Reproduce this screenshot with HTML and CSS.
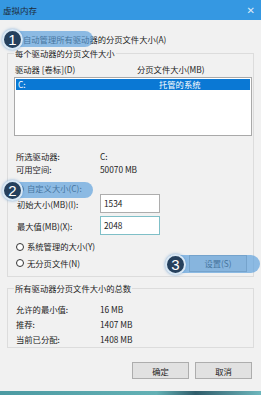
FILE: index.html
```html
<!DOCTYPE html>
<html lang="zh-CN">
<head>
  <meta charset="UTF-8" />
  <title>虚拟内存</title>
  <link rel="stylesheet" href="styles.css">
</head>
<body>
  <div class="window">
    <div class="titlebar">
      <span class="title">虚拟内存</span>
      <span class="close">✕</span>
    </div>

    <div class="content">
      <div class="check-row"><span class="checkbox"></span>自动管理所有驱动器的分页文件大小(A)</div>

      <fieldset class="group group-drive">
        <legend>每个驱动器的分页文件大小</legend>
        <div class="list-head">
          <span class="col-drive">驱动器 [卷标](D)</span>
          <span class="col-size">分页文件大小(MB)</span>
        </div>
        <div class="listbox">
          <div class="list-row selected">
            <span class="col-drive">C:</span>
            <span class="col-size">托管的系统</span>
          </div>
        </div>

        <div class="info">
          <div class="info-row"><span class="key">所选驱动器:</span><span>C:</span></div>
          <div class="info-row"><span class="key">可用空间:</span><span>50070 MB</span></div>
        </div>

        <div class="radio-row custom"><span class="radio"></span>自定义大小(C):</div>
        <div class="field-row"><span class="key">初始大小(MB)(I):</span><span class="input">1534</span></div>
        <div class="field-row"><span class="key">最大值(MB)(X):</span><span class="input active">2048</span></div>

        <div class="radio-row system"><span class="radio"></span>系统管理的大小(Y)</div>
        <div class="radio-row last">
          <span class="radio"></span>无分页文件(N)
          <button class="btn btn-set">设置(S)</button>
        </div>
      </fieldset>

      <fieldset class="group group-total">
        <legend>所有驱动器分页文件大小的总数</legend>
        <div class="info-row"><span class="key">允许的最小值:</span><span>16 MB</span></div>
        <div class="info-row"><span class="key">推荐:</span><span>1407 MB</span></div>
        <div class="info-row"><span class="key">当前已分配:</span><span>1408 MB</span></div>
      </fieldset>

      <div class="actions">
        <button class="btn">确定</button>
        <button class="btn">取消</button>
      </div>
    </div>

    <div class="strip"></div>

    <!-- step markers laid over the dialog -->
    <div class="mark mark-1"><span class="badge">1</span></div>
    <div class="mark mark-2"><span class="badge">2</span></div>
    <div class="mark mark-3"><span class="badge">3</span></div>
  </div>
</body>
</html>
```

FILE: styles.css
```css
* {
  margin: 0;
  padding: 0;
  box-sizing: border-box;
}

body {
  background-color: #f0f0f0;
  font-family: "Noto Sans CJK SC", "Noto Sans", sans-serif;
  font-size: 8.3px;
  color: #1c1c1c;
}

.window {
  position: relative;
  width: 261px;
  height: 395px;
  background-color: #f1f1f1;
  overflow: hidden;
}

.titlebar {
  height: 20px;
  background-color: #3598e2;
  display: flex;
  align-items: center;
  justify-content: space-between;
  padding: 0 6px 0 3px;
}

.title {
  color: #1d2a38;
  font-size: 8.5px;
}

.close {
  color: #dbeaf7;
  font-family: "DejaVu Sans", sans-serif;
  font-size: 10px;
}

.content {
  padding: 13px 7px 0 7px;
}

.check-row {
  display: flex;
  align-items: center;
  height: 12px;
  padding-left: 5px;
  gap: 3px;
}

.checkbox {
  width: 8px;
  height: 8px;
  border: 1px solid #333;
  background-color: #fff;
}

.group {
  border: 1px solid #dcdcdc;
  padding: 4px 1px 4px 6px;
}

.group legend {
  line-height: 12px;
  padding: 0 1px;
}

.group-drive {
  margin-top: 2px;
}

.list-head {
  display: flex;
  line-height: 12px;
  padding-left: 1px;
}

.col-drive {
  width: 122px;
}

.listbox {
  margin-top: 2px;
  height: 59px;
  background-color: #fff;
  border: 1px solid #a9a9a9;
  padding: 1px;
}

.list-row {
  display: flex;
  line-height: 11px;
  padding-left: 2px;
}

.list-row.selected {
  background-color: #0a78d4;
  color: #fff;
}

.list-row .col-drive {
  width: 141px;
}

.info {
  margin-top: 14px;
}

.info-row {
  display: flex;
  line-height: 13px;
  padding-left: 2px;
}

.key {
  width: 84px;
}

.radio-row {
  display: flex;
  align-items: center;
  gap: 3px;
  padding-left: 2px;
  line-height: 11px;
}

.radio {
  width: 8px;
  height: 8px;
  border: 1px solid #333;
  border-radius: 50%;
  background-color: #fff;
}

.radio-row.custom {
  margin-top: 7px;
}

.field-row {
  display: flex;
  align-items: center;
  padding-left: 3px;
  margin-bottom: 3px;
}

.field-row .key {
  width: 83px;
}

.input {
  width: 60px;
  height: 19px;
  background-color: #fff;
  border: 1px solid #adadad;
  padding: 2px 3px;
  line-height: 12px;
}

.input.active {
  border-color: #7fbfc7;
}

.radio-row.system {
  margin-top: 5px;
  line-height: 13px;
}

.radio-row.last {
  margin-top: 1px;
  height: 18px;
}

.btn {
  font-family: inherit;
  font-size: 8.3px;
  color: #1c1c1c;
  background-color: #e1e1e1;
  border: 1px solid #adadad;
  height: 17px;
}

.btn-set {
  margin-left: auto;
  margin-right: 5px;
  width: 58px;
}

.group-total {
  margin-top: 5px;
  padding-top: 8px;
  padding-bottom: 0;
}

.group-total .info-row {
  line-height: 15px;
}

.actions {
  display: flex;
  justify-content: flex-end;
  gap: 6px;
  margin-top: 14px;
  padding-right: 2px;
}

.actions .btn {
  width: 57px;
}

.strip {
  position: absolute;
  left: 0;
  right: 0;
  bottom: 0;
  height: 4px;
  background: linear-gradient(90deg, #4c9aa2, #63b1b5 60%, #2f5c6a 75%, #6db7bd);
}

/* step markers */
.mark {
  position: absolute;
  height: 16px;
  border-radius: 0 9px 9px 0;
  background-color: rgba(88, 158, 220, 0.66);
}

.badge {
  position: absolute;
  left: -5px;
  top: 50%;
  width: 21px;
  height: 21px;
  margin-top: -10.5px;
  border-radius: 50%;
  background-color: #25405d;
  border: 2px solid #d9e8f5;
  box-shadow: 0 0 3px rgba(80, 140, 200, 0.7);
  color: #fff;
  font-family: "Liberation Sans", sans-serif;
  font-size: 15px;
  line-height: 17px;
  text-align: center;
}

.mark-1 {
  left: 7px;
  top: 31px;
  width: 86px;
}

.mark-2 {
  left: 7px;
  top: 182px;
  width: 86px;
}

.mark-3 {
  left: 170px;
  top: 255px;
  width: 90px;
  height: 18px;
}
```
